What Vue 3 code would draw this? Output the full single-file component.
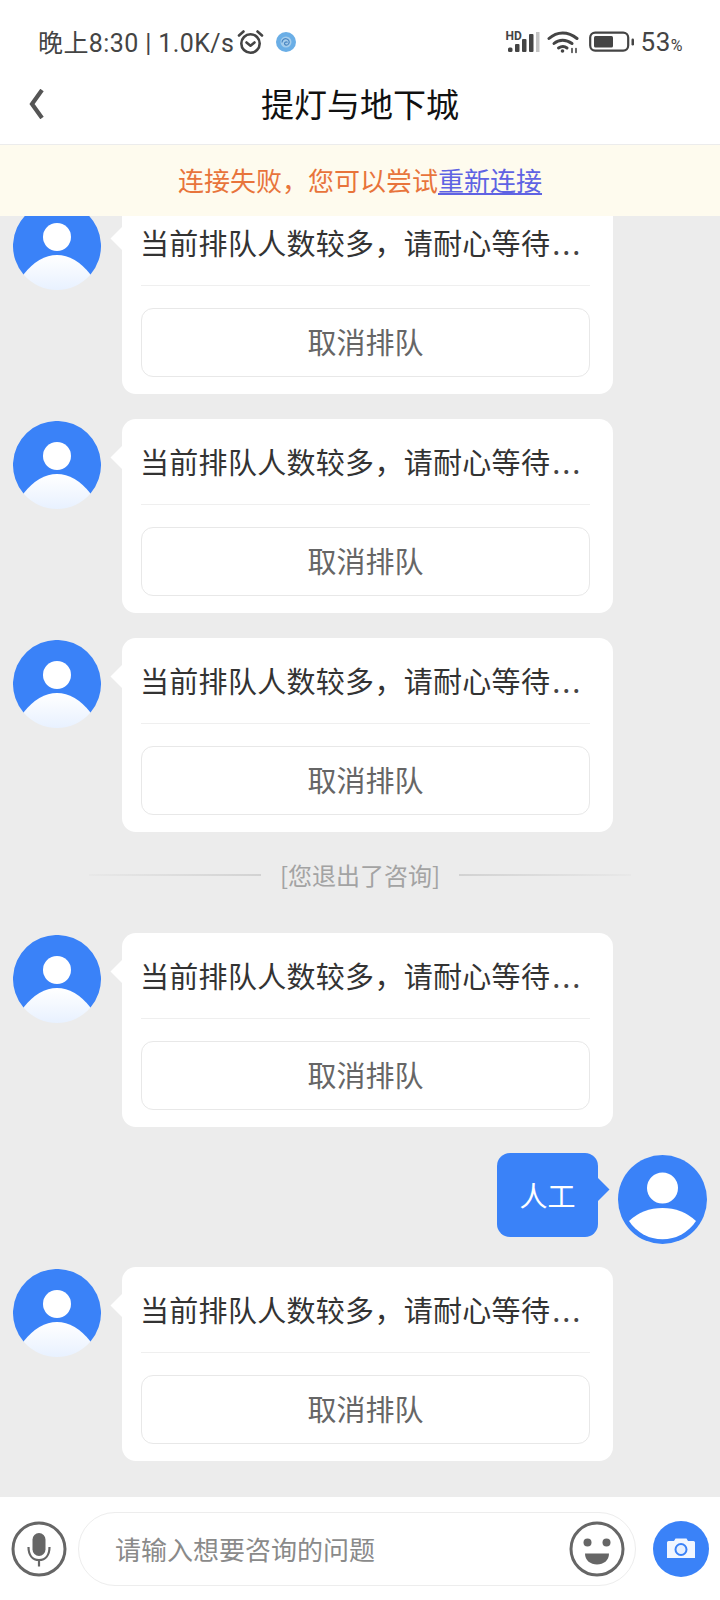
<script setup>
const messages = [
  { type: 'agent', id: 1 },
  { type: 'agent', id: 2 },
  { type: 'agent', id: 3 },
  { type: 'notice', id: 4, text: '[您退出了咨询]' },
  { type: 'agent', id: 5 },
  { type: 'user', id: 6, text: '人工' },
  { type: 'agent', id: 7 },
];
</script>

<template>
  <div class="page">
    <div class="status-bar">
      <div class="status-left">
        <span class="status-text">晚上8:30 | 1.0K/s</span>
        <svg class="alarm" width="27" height="26" viewBox="0 0 27 26" fill="none" stroke="#444" stroke-width="2.6" stroke-linecap="round" stroke-linejoin="round">
          <circle cx="13.5" cy="14.5" r="9.2" />
          <path d="M9.5 13.5l4 3.2 4-3.2" />
          <path d="M2 6.5 6.5 2.5M25 6.5l-4.500-4" />
        </svg>
        <svg class="app-dot" width="22" height="22" viewBox="0 0 22 22">
          <circle cx="11" cy="11" r="10" fill="#6aaee6" />
          <circle cx="11" cy="11" r="5.500" fill="#a5cdec" />
          <path d="M7 11.500c0-3 3-4.500 5-3.500s3 3 1.500 5-4 1-4-.5 2-2 3-1" fill="none" stroke="#4a86c2" stroke-width="1.200" />
        </svg>
      </div>
      <div class="status-right">
        <div class="signal">
          <span class="hd">HD</span>
          <svg width="34" height="22" viewBox="0 0 34 22" fill="#444">
            <rect x="2" y="16.500" width="4.500" height="4.500" rx="1.500" />
            <rect x="9" y="13" width="4.500" height="8" rx="1" />
            <rect x="16" y="8" width="4.500" height="13" rx="1" />
            <rect x="23" y="3" width="4.500" height="18" rx="1" />
            <rect x="30" y="1" width="3.500" height="20" fill="#c4c4c4" />
          </svg>
        </div>
        <svg width="32" height="24" viewBox="0 0 32 24" fill="none" stroke="#444" stroke-width="3" stroke-linecap="round">
          <path d="M2 8.500C10 1 21 1 30 8.500" />
          <path d="M7 13.500c5-4.500 12-4.500 18 0" />
          <path d="M11.500 18c3-2 6-2 8.500 0" />
          <circle cx="15.500" cy="21" r="1.800" fill="#444" stroke="none" />
          <path d="M25 18.500v4M29 18.500v4" stroke-width="1.600" />
        </svg>
        <svg class="battery" width="47" height="22" viewBox="0 0 47 22" fill="none">
          <rect x="1.200" y="1.600" width="38" height="18" rx="5" stroke="#444" stroke-width="2.200" />
          <rect x="5" y="5" width="19" height="11.500" rx="1.500" fill="#444" />
          <rect x="42.500" y="7.500" width="2.500" height="7" rx="1.200" fill="#444" />
        </svg>
        <span class="battery-text">53<small>%</small></span>
      </div>
    </div>

    <div class="nav-bar">
      <svg class="back" width="18" height="30" viewBox="0 0 18 30" fill="none" stroke="#555" stroke-width="4.200" stroke-linejoin="miter">
        <path d="M15 1 5 15l10 14" />
      </svg>
      <span class="title">提灯与地下城</span>
    </div>

    <div class="banner">连接失败，您可以尝试<a class="reconnect">重新连接</a></div>

    <div class="messages">
      <template v-for="msg in messages" :key="msg.id">
        <div v-if="msg.type === 'agent'" class="row">
          <svg class="avatar" width="88" height="88" viewBox="0 0 88 88">
            <defs>
              <linearGradient :id="'body' + msg.id" x1="0" y1="0" x2="0" y2="1">
                <stop offset="0" stop-color="#ffffff" />
                <stop offset="1" stop-color="#e8f1ff" />
              </linearGradient>
            </defs>
            <path d="M10.500 72.500A44 44 0 1 1 77.500 72.500Z" fill="#3a82f8" />
            <circle cx="44" cy="35" r="14" fill="#fff" />
            <path d="M10.500 72.500Q26 53 44 53Q62 53 77.500 72.500A44 44 0 0 1 10.500 72.500Z" :fill="'url(#body' + msg.id + ')'" />
          </svg>
          <div class="card">
            <span class="arrow"></span>
            <div class="card-text">当前排队人数较多，请耐心等待<span class="dots">...</span></div>
            <div class="cancel">取消排队</div>
          </div>
        </div>

        <div v-else-if="msg.type === 'notice'" class="notice">
          <span class="line line-left"></span>
          <span class="notice-text">{{ msg.text }}</span>
          <span class="line line-right"></span>
        </div>

        <div v-else class="row row-user">
          <div class="bubble">
            {{ msg.text }}
            <span class="bubble-arrow"></span>
          </div>
          <svg class="avatar" width="89" height="89" viewBox="0 0 89 89">
            <circle cx="44.500" cy="44.500" r="44.500" fill="#3a82f8" />
            <circle cx="44.500" cy="33" r="15.500" fill="#fff" />
            <path d="M11 66Q25 53 44.500 53Q64 53 78 66A39.800 39.800 0 0 1 11 66Z" fill="#fff" />
          </svg>
        </div>
      </template>
    </div>

    <div class="footer">
      <svg class="tool" width="56" height="56" viewBox="0 0 56 56" fill="none" stroke="#666">
        <circle cx="28" cy="28" r="26" stroke-width="3" />
        <rect x="21.500" y="12" width="13" height="23" rx="6.500" fill="#666" stroke="none" />
        <path d="M17.500 26c0 8 4 13 10.500 13s10.500-5 10.500-13M28 39v6.500" stroke-width="2.200" />
      </svg>
      <div class="input-box">
        <span class="placeholder">请输入想要咨询的问题</span>
        <svg class="tool" width="56" height="56" viewBox="0 0 56 56" fill="none" stroke="#666">
          <circle cx="28" cy="28" r="26" stroke-width="3" />
          <circle cx="18.500" cy="21.500" r="4" fill="#666" stroke="none" />
          <circle cx="37.500" cy="21.500" r="4" fill="#666" stroke="none" />
          <path d="M16 32.500h24c0 7-5.500 11-12 11s-12-4-12-11Z" fill="#666" stroke="none" />
        </svg>
      </div>
      <div class="camera">
        <svg width="28" height="21" viewBox="0 0 28 21">
          <path d="M1.500 3H7L8.500.5h11L21 3h5.500A1.500 1.500 0 0 1 28 4.500V20H0V4.500A1.500 1.500 0 0 1 1.500 3Z" fill="#f1f6ff" />
          <circle cx="14" cy="11.500" r="5.500" fill="#e6effe" stroke="#3a82f8" stroke-width="2" />
        </svg>
      </div>
    </div>
  </div>
</template>

<style scoped>
.page {
  width: 720px;
  height: 1600px;
  display: flex;
  flex-direction: column;
  overflow: hidden;
  background: #ececec;
  font-family: "Noto Sans CJK SC", "Noto Sans", sans-serif;
}

.status-bar {
  height: 66px;
  flex-shrink: 0;
  padding: 18px 37px 0 38px;
  box-sizing: border-box;
  display: flex;
  justify-content: space-between;
  align-items: center;
  background: #fff;
}

.status-left,
.status-right {
  display: flex;
  align-items: center;
}

.status-text {
  margin-top: -3px;
  font-family: Roboto, "Noto Sans CJK SC", sans-serif;
  font-size: 25px;
  color: #444;
  white-space: nowrap;
  letter-spacing: 0.4px;
}

.alarm {
  margin-left: 3px;
}

.app-dot {
  margin-left: 11px;
}

.signal {
  display: flex;
  position: relative;
  margin-right: 7px;
}

.hd {
  position: absolute;
  left: 0;
  top: -1px;
  font-family: Roboto, sans-serif;
  font-size: 12px;
  font-weight: 700;
  line-height: 12px;
  color: #444;
}

.battery {
  margin-left: 10px;
}

.battery-text {
  margin-left: 5px;
  font-family: Roboto, sans-serif;
  font-size: 26px;
  color: #444;
  letter-spacing: 0.5px;
}

.battery-text small {
  font-size: 16px;
}

.nav-bar {
  height: 79px;
  flex-shrink: 0;
  box-sizing: border-box;
  position: relative;
  display: flex;
  justify-content: center;
  align-items: center;
  padding-bottom: 4px;
  background: #fff;
  border-bottom: 1px solid #ececec;
}

.back {
  position: absolute;
  left: 27px;
  top: 23px;
}

.title {
  font-size: 33px;
  color: #111;
}

.banner {
  height: 71px;
  flex-shrink: 0;
  box-sizing: border-box;
  display: flex;
  justify-content: center;
  align-items: center;
  padding-bottom: 3px;
  font-size: 26px;
  color: #e8743b;
  background: #fefbee;
  position: relative;
  z-index: 1;
}

.reconnect {
  color: #5f63e3;
  text-decoration: underline;
}

.messages {
  flex: 1;
  min-height: 0;
  overflow: hidden;
  display: flex;
  flex-direction: column;
  justify-content: flex-end;
  gap: 25px;
  padding-bottom: 36px;
}

.row {
  display: flex;
  align-items: flex-start;
  flex-shrink: 0;
  padding-left: 13px;
}

.row-user {
  justify-content: flex-end;
  padding: 0 13px 0 0;
  margin-bottom: -2px;
  margin-top: 1px;
}

.avatar {
  flex-shrink: 0;
  margin-top: 2px;
}

.card {
  position: relative;
  width: 491px;
  height: 194px;
  margin-left: 21px;
  padding: 0 23px 17px 19px;
  box-sizing: border-box;
  background: #fff;
  border-radius: 14px;
}

.arrow {
  position: absolute;
  left: -8px;
  top: 30px;
  width: 17px;
  height: 17px;
  background: #fff;
  transform: rotate(45deg);
}

.card-text {
  height: 86px;
  line-height: 85px;
  box-sizing: border-box;
  border-bottom: 1px solid #efefef;
  font-size: 29px;
  letter-spacing: 0.3px;
  text-indent: -1px;
  color: #333;
  white-space: nowrap;
}

.dots {
  margin-left: 2px;
  letter-spacing: 2px;
  color: #444;
}

.cancel {
  height: 69px;
  margin-top: 22px;
  padding-bottom: 3px;
  box-sizing: border-box;
  display: flex;
  justify-content: center;
  align-items: center;
  border: 1px solid #e8e8e8;
  border-radius: 12px;
  font-size: 29px;
  color: #666;
}

.notice {
  height: 51px;
  flex-shrink: 0;
  box-sizing: border-box;
  padding-bottom: 16px;
  display: flex;
  justify-content: center;
  align-items: center;
  gap: 19px;
}

.notice-text {
  font-size: 24px;
  color: #a3a3a3;
}

.line {
  width: 172px;
  height: 2px;
}

.line-left {
  background: linear-gradient(to right, #e8e8e8, #d2d2d2);
}

.line-right {
  background: linear-gradient(to left, #e8e8e8, #d2d2d2);
}

.bubble {
  position: relative;
  width: 101px;
  height: 84px;
  margin-right: 20px;
  display: flex;
  justify-content: center;
  align-items: center;
  background: #3a82f8;
  border-radius: 13px;
  font-size: 28px;
  color: #fff;
}

.bubble-arrow {
  position: absolute;
  right: -8px;
  top: 28px;
  width: 17px;
  height: 17px;
  background: #3a82f8;
  transform: rotate(45deg);
}

.footer {
  height: 103px;
  flex-shrink: 0;
  box-sizing: border-box;
  display: flex;
  align-items: center;
  padding: 0 11px 0 11px;
  background: #fff;
}

.tool {
  flex-shrink: 0;
}

.input-box {
  width: 558px;
  height: 74px;
  margin-left: 11px;
  padding: 0 10px 0 36px;
  box-sizing: border-box;
  display: flex;
  justify-content: space-between;
  align-items: center;
  border: 1px solid #ededed;
  border-radius: 37px;
}

.placeholder {
  font-size: 26px;
  color: #8a8a8a;
}

.camera {
  width: 56px;
  height: 56px;
  margin-left: 17px;
  display: flex;
  justify-content: center;
  align-items: center;
  border-radius: 50%;
  background: #3a82f8;
}
</style>
